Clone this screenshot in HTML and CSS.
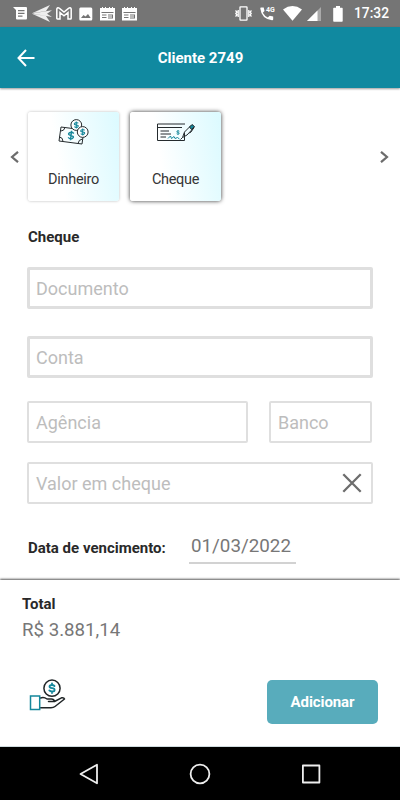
FILE: index.html
```html
<!DOCTYPE html>
<html lang="pt-BR">
<head>
<meta charset="utf-8">
<meta name="viewport" content="width=device-width">
<title>Cliente 2749</title>
<link rel="stylesheet" href="styles.css">
</head>
<body>
<div class="screen">
  <div class="status">
    <div class="notifications">
      <svg width="14" height="13" viewBox="0 0 14 13"><path fill="#fff" fill-rule="evenodd" d="M0 0H13Q14 0 14 1V11.300Q14 12.500 13 12.500H4Q3 12.500 3 11.500V3ZM5 3V4.300H11.500V3ZM5 5.700V7H11.500V5.700ZM5 8.400V9.700H9.500V8.400Z"/></svg>
      <svg width="20" height="17" viewBox="0 0 20 17"><path fill="#eee" d="M0 8.300 18 0 14 6ZM0 8.500 20 5.200 15 8.700 20 12ZM0 8.700 18 17 14 11Z"/></svg>
      <svg width="16" height="13" viewBox="0 0 16 13"><path fill="#757575" stroke="#fff" stroke-width="1.500" d="M.8 2Q1.500 0 3.500 1.300L8 5 12.500 1.300Q14.500 0 15.200 2V11.200Q15.200 12 14.500 12H12V5.500L8 8.800 4 5.500V12H1.500Q.8 12 .8 11.200Z"/></svg>
      <svg width="14" height="14" viewBox="0 0 14 14"><path fill="#fff" fill-rule="evenodd" d="M1.500.5H12Q13.300.5 13.300 2V12Q13.300 13.500 12 13.500H1.500Q.3 13.500.3 12V2Q.3.500 1.500.5ZM2 11H11.700L9 7 6.500 9.500 4.500 8Z"/></svg>
      <svg width="15" height="14" viewBox="0 0 15 14"><path fill="#fff" fill-rule="evenodd" d="M0 1H2V0H3V1H5V0H6V1H9V0H10V1H12V0H13V1H15V13.500H0ZM1.500 5V6H13.500V5ZM2 7.500V8.500H6.500V7.500ZM2 10V11H6.500V10ZM8 7.500V11.500H13V7.500Z"/><path fill="#bbb" d="M8 8H12V11H8Z"/></svg>
      <svg width="15" height="14" viewBox="0 0 15 14"><path fill="#fff" fill-rule="evenodd" d="M0 1H2V0H3V1H5V0H6V1H9V0H10V1H12V0H13V1H15V13.500H0ZM1.500 5V6H13.500V5ZM2 7.500V8.500H6.500V7.500ZM2 10V11H6.500V10ZM8 7.500V11.500H13V7.500Z"/><path fill="#bbb" d="M8 8H12V11H8Z"/></svg>
    </div>
    <div class="system">
      <svg class="vibrate" width="17" height="15" viewBox="0 0 17 15" fill="none" stroke="#fff" stroke-width="1.300"><rect x="5" y=".8" width="7" height="13.400" rx=".5"/><path d="M.5 4.500 2 6 .8 7.500 2 9 .5 10.500M3.200 4V11M16.500 4.500 15 6 16.200 7.500 15 9 16.500 10.500M13.800 4V11"/></svg>
      <svg class="call" width="17" height="15" viewBox="0 0 17 15"><path fill="#fff" d="M1 1.500H3.700L4.500 5 2.800 6.800Q4.500 10 7.800 11.400L9.700 9.700 13.200 10.400V13.300Q13.200 14.300 12 14.200Q1.500 13 .3 2.500Q.2 1.500 1 1.500Z"/><text class="network" x="6" y="6">4G</text></svg>
      <svg class="wifi" width="19" height="15" viewBox="0 0 19 15"><path fill="#fff" d="M0 3.400Q9.500-3.400 19 3.400L9.500 14.800Z"/></svg>
      <svg class="signal" width="14" height="14" viewBox="0 0 14 14"><path fill="#aaa" d="M14 0V14H0Z"/><path fill="#fff" d="M10.500 3.500V14H0Z"/></svg>
      <svg class="battery" width="10" height="16" viewBox="0 0 10 16"><path fill="#fff" d="M3 0H7V1.700H9Q9.700 1.700 9.700 2.500V15Q9.700 15.700 9 15.700H1Q.2 15.700.2 15V2.500Q.2 1.700 1 1.700H3Z"/></svg>
      <span class="time">17:32</span>
    </div>
  </div>

  <header class="appbar">
    <svg class="back" width="18" height="18" viewBox="0 0 18 18" fill="none" stroke="#fff" stroke-width="2"><path d="M17.500 9H1.500M9 1 1.500 9 9 17"/></svg>
    <h1>Cliente 2749</h1>
  </header>

  <main>
    <div class="methods">
      <svg class="chevron" width="9" height="12" viewBox="0 0 9 12"><path d="M8 .8 2 6 8 11.200"/></svg>
      <div class="cards">
        <div class="card">
          <svg width="32" height="28" viewBox="0 0 32 28" fill="none" stroke="#252b2e" stroke-width="1">
            <path d="M3 8 26 11 24 25 1 22Z M3 12Q6 12 7 8.500M1.500 18Q5 18.500 5 22.500M24.500 20Q20.500 20.500 20 24.500" stroke-linejoin="round"/>
            <circle cx="18.300" cy="6" r="5.400" fill="#fff"/><circle cx="24.700" cy="13" r="5.400" fill="#fff"/>
            <g class="dollar"><path transform="translate(18.300 6)" d="M2-1.800Q0-3.200-1.500-1.800T0 0T1.500 1.900T-2 1.700M0-3.500V3.500"/><path transform="translate(24.700 13)" d="M2-1.800Q0-3.200-1.500-1.800T0 0T1.500 1.900T-2 1.700M0-3.500V3.500"/><path transform="translate(13 16.500) rotate(7) scale(1.300)" d="M2-1.800Q0-3.200-1.500-1.800T0 0T1.500 1.900T-2 1.700M0-3.700V3.700"/></g>
          </svg>
          <span>Dinheiro</span>
        </div>
        <div class="card selected">
          <svg width="40" height="28" viewBox="0 0 40 28" fill="none" stroke="#252b2e" stroke-width="1">
            <path d="M29 5H1.500V21.500H28.500V14M1.500 8.500H26M4.500 12H13M4.500 15H15M4.500 18H10"/>
            <path d="M26.500 18.500 28.500 13 35 6.500 38 8.500 31 16ZM26.500 18.500 24.500 20.500M38 8.500 35 13 33.500 14"/>
            <path fill="#15879b" d="M33.500 8 36 5.500 38.500 7.500 35.500 10.500Z"/>
            <path stroke="#15879b" d="M12 19.500 14.500 17 15.500 19.500 18 17.500 19 19.500 21.500 18.500 23.500 20"/>
            <path class="dollar" transform="translate(22 13.500) scale(.7)" d="M2-1.800Q0-3.200-1.500-1.800T0 0T1.500 1.900T-2 1.700M0-3.500V3.500"/>
          </svg>
          <span>Cheque</span>
        </div>
      </div>
      <svg class="chevron" width="9" height="12" viewBox="0 0 9 12"><path d="M1 .8 7 6 1 11.200"/></svg>
    </div>

    <h2>Cheque</h2>
    <div class="form">
      <div class="field document">Documento</div>
      <div class="field account">Conta</div>
      <div class="row">
        <div class="field agency">Agência</div>
        <div class="field bank">Banco</div>
      </div>
      <div class="field value"><span>Valor em cheque</span>
        <svg width="20" height="20" viewBox="0 0 20 20"><path fill="none" stroke="#6d6d6d" stroke-width="2.300" d="M1.300 1.300 18.700 18.700M18.700 1.300 1.300 18.700"/></svg>
      </div>
    </div>
    <div class="due"><span class="due-label">Data de vencimento:</span><span class="date">01/03/2022</span></div>
  </main>

  <footer>
    <div class="total">Total</div>
    <div class="amount">R$ 3.881,14</div>
    <div class="actions">
      <svg width="38" height="34" viewBox="0 0 38 34" fill="none" stroke="#202527" stroke-width="1.500" stroke-linejoin="round" stroke-linecap="round">
        <circle cx="23" cy="9.200" r="8.100"/>
        <path class="coin-sign" transform="translate(23 9.200)" d="M2.500-2.200Q1.500-3.200 0-3.200Q-2.500-3.200-2.500-1.600Q-2.500-.1 0 0Q2.600.1 2.600 1.700Q2.600 3.300 0 3.300Q-1.800 3.300-2.700 2.200M0-4.900V-3.200M0 3.300V4.900"/>
        <path d="M11.500 19Q15 17.700 18 20H22.500Q25 20 25.500 22.500H19.500M25.500 22.500 32.500 18.800Q35 18.300 35.500 20L26 27.500Q24.500 28.800 22 28.800H11.500"/>
        <rect x="1.500" y="17" width="9.200" height="13.500" stroke="#15879b" stroke-linejoin="miter"/>
      </svg>
      <button>Adicionar</button>
    </div>
  </footer>

  <nav>
    <svg width="20" height="22" viewBox="0 0 20 22"><path d="M18 1.700V20.300L1.500 11Z"/></svg>
    <svg width="22" height="22" viewBox="0 0 22 22"><circle cx="11" cy="11" r="9.400"/></svg>
    <svg width="20" height="20" viewBox="0 0 20 20"><rect x="1.900" y="1.500" width="16.500" height="17"/></svg>
  </nav>
</div>
</body>
</html>
```
FILE: styles.css
```css
* { box-sizing: border-box; }
body { margin: 0; font-family: Roboto, "Liberation Sans", sans-serif; background: #fff; }
svg { display: block; flex: none; }
h1, h2 { margin: 0; }
.screen { width: 400px; height: 800px; display: flex; flex-direction: column; overflow: hidden; }
.status { height: 27px; background: #757575; display: flex; align-items: center; justify-content: space-between; padding: 0 11px 0 13px; }
.notifications { display: flex; align-items: center; gap: 7px; }
.notifications svg:nth-child(2) { margin: 0 -3px 0 -2px; }
.system { display: flex; align-items: center; }
.call { margin-left: 8px; }
.network { font: bold 7px Roboto, sans-serif; fill: #fff; }
.wifi { margin-left: 6px; }
.signal { margin-left: 5px; }
.battery { margin-left: 12px; }
.time { margin-left: 11px; width: 35px; color: #fff; font-size: 13.8px; font-weight: 500; line-height: 27px; }
.appbar { height: 61px; background: #1089a0; color: #fff; display: grid; grid-template-columns: 50px 1fr 49px; align-items: center; box-shadow: 0 1px 2px rgba(0,0,0,.4); z-index: 1; }
.back { margin-left: 17px; }
h1 { text-align: center; font-size: 15px; font-weight: 700; }
main { height: 492px; padding: 24px 27px 0; }
.methods { height: 89px; display: flex; align-items: center; justify-content: space-between; margin: 0 -16px 0 -17px; }
.cards { display: flex; gap: 11px; margin: 0 auto 0 9px; }
.chevron { fill: none; stroke: #6c6c6c; stroke-width: 2.2; }
.card { width: 91px; height: 89px; border-radius: 3px; background: linear-gradient(80deg, #fff 35%, #dbfaff); box-shadow: 0 0 3px rgba(0,0,0,.28); display: flex; flex-direction: column; align-items: center; padding-top: 7px; color: #353535; font-size: 14.5px; line-height: 20px; letter-spacing: -.3px; }
.card span { margin-top: 23px; }
.card.selected { box-shadow: 0 0 4px rgba(0,0,0,.8); }
.dollar { stroke: #15879b; stroke-width: 1.1; }
.coin-sign { stroke: #15879b; stroke-width: 1.8; }
h2 { margin: 26px 0 0 1px; font-size: 15px; line-height: 20px; font-weight: 700; color: #292929; }
.form { display: flex; flex-direction: column; margin-top: 20px; }
.field { height: 42px; border: 2px solid #dfdfdf; border-radius: 2px; padding: 0 7px; color: #bdbdbd; font-size: 18px; line-height: 39px; }
.document, .account { border-width: 3px; padding: 0 6px; line-height: 37px; }
.account { margin-top: 27px; }
.row { display: flex; gap: 21px; margin-top: 23px; }
.agency { width: 221px; }
.bank { width: 103px; }
.value { margin-top: 19px; display: flex; align-items: center; justify-content: space-between; padding-right: 9px; }
.due { display: flex; align-items: center; height: 29px; margin: 31px 0 0 1px; }
.due-label { width: 161px; font-size: 15px; font-weight: 700; color: #292929; line-height: 20px; margin-top: -4px; }
.date { width: 107px; height: 29px; padding-left: 2px; border-bottom: 2px solid #d2d2d2; color: #777; font-size: 18.8px; line-height: 23px; }
footer { height: 167px; padding: 14px 22px 0; background: #fff; border-bottom: 1px solid #d0dcdf; box-shadow: 0 -1px 2px rgba(0,0,0,.65); }
.total { font-size: 15px; line-height: 20px; font-weight: 700; color: #292929; }
.amount { margin-top: 4px; font-size: 18.7px; line-height: 24px; color: #777; }
.actions { display: flex; align-items: flex-start; justify-content: space-between; margin: 38px 0 0 7px; height: 44px; }
.actions svg { margin-top: -1px; }
button { width: 111px; height: 44px; border: 0; border-radius: 5px; background: #58acbc; color: #fff; font: 700 15px Roboto, sans-serif; letter-spacing: -.1px; }
nav { height: 53px; background: #000; display: flex; align-items: center; justify-content: space-between; padding: 0 79px; }
nav svg { fill: none; stroke: #eee; stroke-width: 1.8; stroke-linejoin: round; }
```
